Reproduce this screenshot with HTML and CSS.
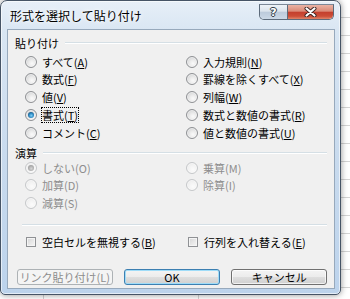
FILE: index.html
```html
<!DOCTYPE html>
<html lang="ja">
<head>
<meta charset="utf-8">
<title>形式を選択して貼り付け</title>
<link rel="stylesheet" href="styles.css">
</head>
<body>
<div class="window">
  <div class="titlebar">
    <span class="title">形式を選択して貼り付け</span>
    <div class="caption">
      <div class="cbtn help"><span class="qmark">?</span></div>
      <div class="cbtn close">
        <svg width="13" height="10" viewBox="0 0 13 10"><path d="M2.5 1.5 L10.5 8.5 M10.5 1.5 L2.5 8.5" stroke="#3a2320" stroke-width="4" stroke-linecap="round"/><path d="M2.5 1.5 L10.5 8.5 M10.5 1.5 L2.5 8.5" stroke="#ffffff" stroke-width="2.2" stroke-linecap="round"/></svg>
      </div>
    </div>
  </div>
  <div class="client">
    <div class="head"><span>貼り付け</span><div class="rule"></div></div>
    <div class="opts first">
      <div class="opt"><span class="radio"></span><span class="txt">すべて(<u>A</u>)</span></div>
      <div class="opt"><span class="radio"></span><span class="txt">入力規則(<u>N</u>)</span></div>
      <div class="opt"><span class="radio"></span><span class="txt">数式(<u>F</u>)</span></div>
      <div class="opt"><span class="radio"></span><span class="txt">罫線を除くすべて(<u>X</u>)</span></div>
      <div class="opt"><span class="radio"></span><span class="txt">値(<u>V</u>)</span></div>
      <div class="opt"><span class="radio"></span><span class="txt">列幅(<u>W</u>)</span></div>
      <div class="opt"><span class="radio checked"></span><span class="txt focus">書式(<u>T</u>)</span></div>
      <div class="opt"><span class="radio"></span><span class="txt">数式と数値の書式(<u>R</u>)</span></div>
      <div class="opt"><span class="radio"></span><span class="txt">コメント(<u>C</u>)</span></div>
      <div class="opt"><span class="radio"></span><span class="txt">値と数値の書式(<u>U</u>)</span></div>
    </div>
    <div class="head second"><span>演算</span><div class="rule"></div></div>
    <div class="opts disabled">
      <div class="opt"><span class="radio checked"></span><span class="txt">しない(O)</span></div>
      <div class="opt"><span class="radio"></span><span class="txt">乗算(M)</span></div>
      <div class="opt"><span class="radio"></span><span class="txt">加算(D)</span></div>
      <div class="opt"><span class="radio"></span><span class="txt">除算(I)</span></div>
      <div class="opt"><span class="radio"></span><span class="txt">減算(S)</span></div>
    </div>
    <div class="sep"></div>
    <div class="checks">
      <div class="opt"><span class="check"></span><span class="txt">空白セルを無視する(<u>B</u>)</span></div>
      <div class="opt"><span class="check"></span><span class="txt">行列を入れ替える(<u>E</u>)</span></div>
    </div>
    <div class="buttons">
      <div class="btn disabled-btn">リンク貼り付け(L)</div>
      <div class="btn default-btn">OK</div>
      <div class="btn">キャンセル</div>
    </div>
  </div>
</div>
</body>
</html>
```
FILE: styles.css
```css
html, body {
  margin: 0;
  padding: 0;
}
body {
  width: 350px;
  height: 299px;
  overflow: hidden;
  background-color: #ffffff;
  background-image:
    linear-gradient(to right, transparent 0 43px, #d4d4d4 43px 44px, transparent 44px 198px, #d4d4d4 198px 199px, transparent 199px),
    repeating-linear-gradient(to bottom, transparent 0 17px, #d4d4d4 17px 18px);
  font-family: "Noto Sans CJK JP", "Noto Sans", sans-serif;
  color: #000;
}
.window {
  width: 341px;
  height: 295px;
  box-sizing: border-box;
  border: 1px solid #465466;
  border-radius: 7px 7px 5px 5px;
  padding: 0 5px 5px 6px;
  background: linear-gradient(to bottom, #e7eff8 0, #d9e6f3 30px, #c9dbee 150px, #bcd3ec 100%);
  box-shadow: 0 0 6px rgba(0, 0, 0, 0.45), inset 0 0 0 1px rgba(255, 255, 255, 0.6);
  display: flex;
  flex-direction: column;
}
.titlebar {
  height: 28px;
  flex: none;
  display: flex;
  justify-content: space-between;
  align-items: flex-start;
}
.title {
  margin: 8px 0 0 3px;
  font-size: 12px;
  line-height: 14px;
  color: #000;
  text-shadow: 0 0 6px #ffffff, 0 0 3px #ffffff;
}
.caption {
  margin: 3px 1px 0 0;
  height: 16px;
  display: flex;
  border: 1px solid #5d6b7b;
  border-top-color: #7c8897;
  border-radius: 0 0 5px 5px;
  overflow: hidden;
  box-sizing: border-box;
}
.cbtn {
  height: 100%;
  display: flex;
  align-items: center;
  justify-content: center;
}
.help {
  width: 27px;
  background: linear-gradient(to bottom, #eef3f8 0, #dbe3ec 45%, #bccadb 50%, #cbd8e6 100%);
  border-right: 1px solid #5d6b7b;
  border-bottom-left-radius: 4px;
}
.qmark {
  font-family: "DejaVu Sans", sans-serif;
  font-weight: bold;
  font-size: 11px;
  line-height: 11px;
  color: #ffffff;
  text-shadow: 0 0 1px #38434f, 0 0 1px #38434f, 1px 0 0 #38434f, -1px 0 0 #38434f, 0 1px 0 #38434f, 0 -1px 0 #38434f;
}
.close {
  width: 45px;
  background: linear-gradient(to bottom, #eab3a5 0, #da8a77 45%, #c43f2d 50%, #cc4d37 80%, #e0866a 100%);
  border-bottom-right-radius: 4px;
}
.close svg {
  display: block;
}
.client {
  height: 260px;
  flex: none;
  box-sizing: border-box;
  border: 1px solid #97a9bc;
  background: #f0f0f0;
  padding: 7px 7px 0 7px;
  font-size: 11px;
}
.head {
  display: flex;
  align-items: center;
  height: 12px;
  line-height: 12px;
}
.head .rule {
  flex: 1;
  height: 0;
  border-top: 1px solid #d5dfe5;
  border-bottom: 1px solid #ffffff;
  margin-left: 6px;
}
.head.second {
  margin-top: 5.2px;
}
.opts {
  display: grid;
  grid-template-columns: 161px 1fr;
  grid-auto-rows: 17.75px;
  padding-left: 10px;
}
.opts.first {
  margin-top: 3.8px;
}
.opt {
  display: flex;
  align-items: center;
  gap: 5px;
  white-space: nowrap;
}
.txt {
  line-height: 14px;
}
.txt.focus {
  outline: 1px dotted #000;
  outline-offset: 0;
}
.radio {
  width: 12px;
  height: 12px;
  box-sizing: border-box;
  flex: none;
  border-radius: 50%;
  border: 1px solid #8f9194;
  background: radial-gradient(circle at 60% 65%, #fafafa 0, #ececec 35%, #d5d6d7 75%, #c9cacb 100%);
  box-shadow: inset 0 0 0 1px rgba(255, 255, 255, 0.5);
  position: relative;
}
.radio.checked::after {
  content: "";
  position: absolute;
  left: 2px;
  top: 2px;
  width: 6px;
  height: 6px;
  border-radius: 50%;
  background: radial-gradient(circle at 55% 60%, #7fd0f7 0, #2e89c2 45%, #0d3f66 90%);
}
.opts.disabled .txt {
  color: #8d8d8d;
}
.opts.disabled .radio {
  border-color: #c6c8ca;
  background: radial-gradient(circle at 60% 65%, #fbfbfb 0, #f2f2f2 50%, #e6e6e6 100%);
}
.opts.disabled .radio.checked::after {
  background: radial-gradient(circle at 55% 60%, #d6d6d6 0, #a8a8a8 60%, #8e8e8e 100%);
}
.sep {
  margin: 12px 0 0 7px;
  height: 0;
  border-top: 1px solid #d5dfe5;
  border-bottom: 1px solid #ffffff;
}
.checks {
  margin-top: 8.5px;
  display: grid;
  grid-template-columns: 162px 1fr;
  height: 16px;
  padding-left: 11px;
}
.checks .opt {
  gap: 6px;
}
.check {
  width: 10px;
  height: 10px;
  box-sizing: border-box;
  flex: none;
  border: 1px solid #8f9194;
  background: linear-gradient(135deg, #d3d4d5 0, #e6e6e6 50%, #f6f6f6 100%);
  box-shadow: inset 0 0 0 1px #f4f4f4;
}
.buttons {
  margin-top: 18.5px;
  padding-left: 2px;
  display: flex;
  gap: 11.5px;
}
.btn {
  width: 96px;
  height: 16px;
  box-sizing: border-box;
  border: 1px solid #707070;
  border-radius: 3px;
  background: linear-gradient(to bottom, #f4f4f4 0, #ececec 48%, #dedede 52%, #d0d0d0 100%);
  box-shadow: inset 0 0 0 1px rgba(255, 255, 255, 0.7);
  display: flex;
  align-items: center;
  justify-content: center;
  font-size: 11px;
  line-height: 12px;
  white-space: nowrap;
}
.btn.default-btn {
  border-color: #3c7fb1;
  box-shadow: inset 0 0 0 1px #9fdcf8;
}
.btn.disabled-btn {
  border-color: #adb2b5;
  background: #f4f4f4;
  box-shadow: none;
  color: #8d8d8d;
}
```
